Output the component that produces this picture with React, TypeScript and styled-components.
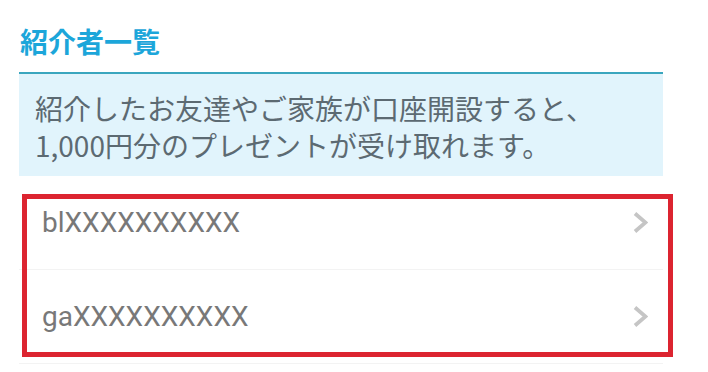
import React from "react";
import styled, { createGlobalStyle } from "styled-components";

const GlobalStyle = createGlobalStyle`
  html, body {
    margin: 0;
    padding: 0;
    background: #ffffff;
  }
  body {
    font-family: "Noto Sans CJK JP", "Noto Sans", sans-serif;
  }
`;

const Page = styled.div`
  width: 644px;
  padding: 0 0 0 19px;
  display: flex;
  flex-direction: column;
`;

const Title = styled.h1`
  margin: 0;
  padding: 23px 0 13px 1px;
  font-family: "Noto Sans CJK JP", sans-serif;
  font-size: 28px;
  line-height: 36px;
  font-weight: 700;
  color: #1ca6da;
`;

const InfoBox = styled.div`
  border-top: 2px solid #3aa6be;
  background: #e1f4fc;
  padding: 16px 12px 12px 16px;
  font-family: "Noto Sans CJK JP", sans-serif;
  font-size: 28px;
  line-height: 37px;
  color: #5c6a72;
  white-space: nowrap;
`;

const ListWrap = styled.div`
  position: relative;
`;

const List = styled.ul`
  list-style: none;
  margin: 0;
  padding: 0;
  display: flex;
  flex-direction: column;
`;

const Row = styled.li`
  height: 93px;
  display: flex;
  align-items: center;
  justify-content: space-between;
  padding: 0 15px 0 23px;
  border-bottom: 1px solid #f3f3f3;
`;

const RowLabel = styled.span`
  font-family: Roboto, "Noto Sans", sans-serif;
  font-size: 28px;
  color: #787878;
`;

const Highlight = styled.div`
  position: absolute;
  top: 18px;
  left: 3px;
  width: 651px;
  height: 163px;
  box-sizing: border-box;
  border: 5px solid #dc2430;
  pointer-events: none;
`;

const Chevron = () => (
  <svg width="15" height="23" viewBox="0 0 15 23" aria-hidden="true">
    <polyline
      points="2,2.5 12.5,11.5 2,20.5"
      fill="none"
      stroke="#c5c5c5"
      strokeWidth="3.8"
      strokeLinecap="butt"
      strokeLinejoin="miter"
    />
  </svg>
);

const referrals = ["blXXXXXXXXXX", "gaXXXXXXXXXX"];

export default function App() {
  return (
    <>
      <GlobalStyle />
      <Page>
        <Title>紹介者一覧</Title>
        <InfoBox>
          紹介したお友達やご家族が口座開設すると、
          <br />
          1,000円分のプレゼントが受け取れます。
        </InfoBox>
        <ListWrap>
          <List>
            {referrals.map((r) => (
              <Row key={r}>
                <RowLabel>{r}</RowLabel>
                <Chevron />
              </Row>
            ))}
          </List>
          <Highlight />
        </ListWrap>
      </Page>
    </>
  );
}
